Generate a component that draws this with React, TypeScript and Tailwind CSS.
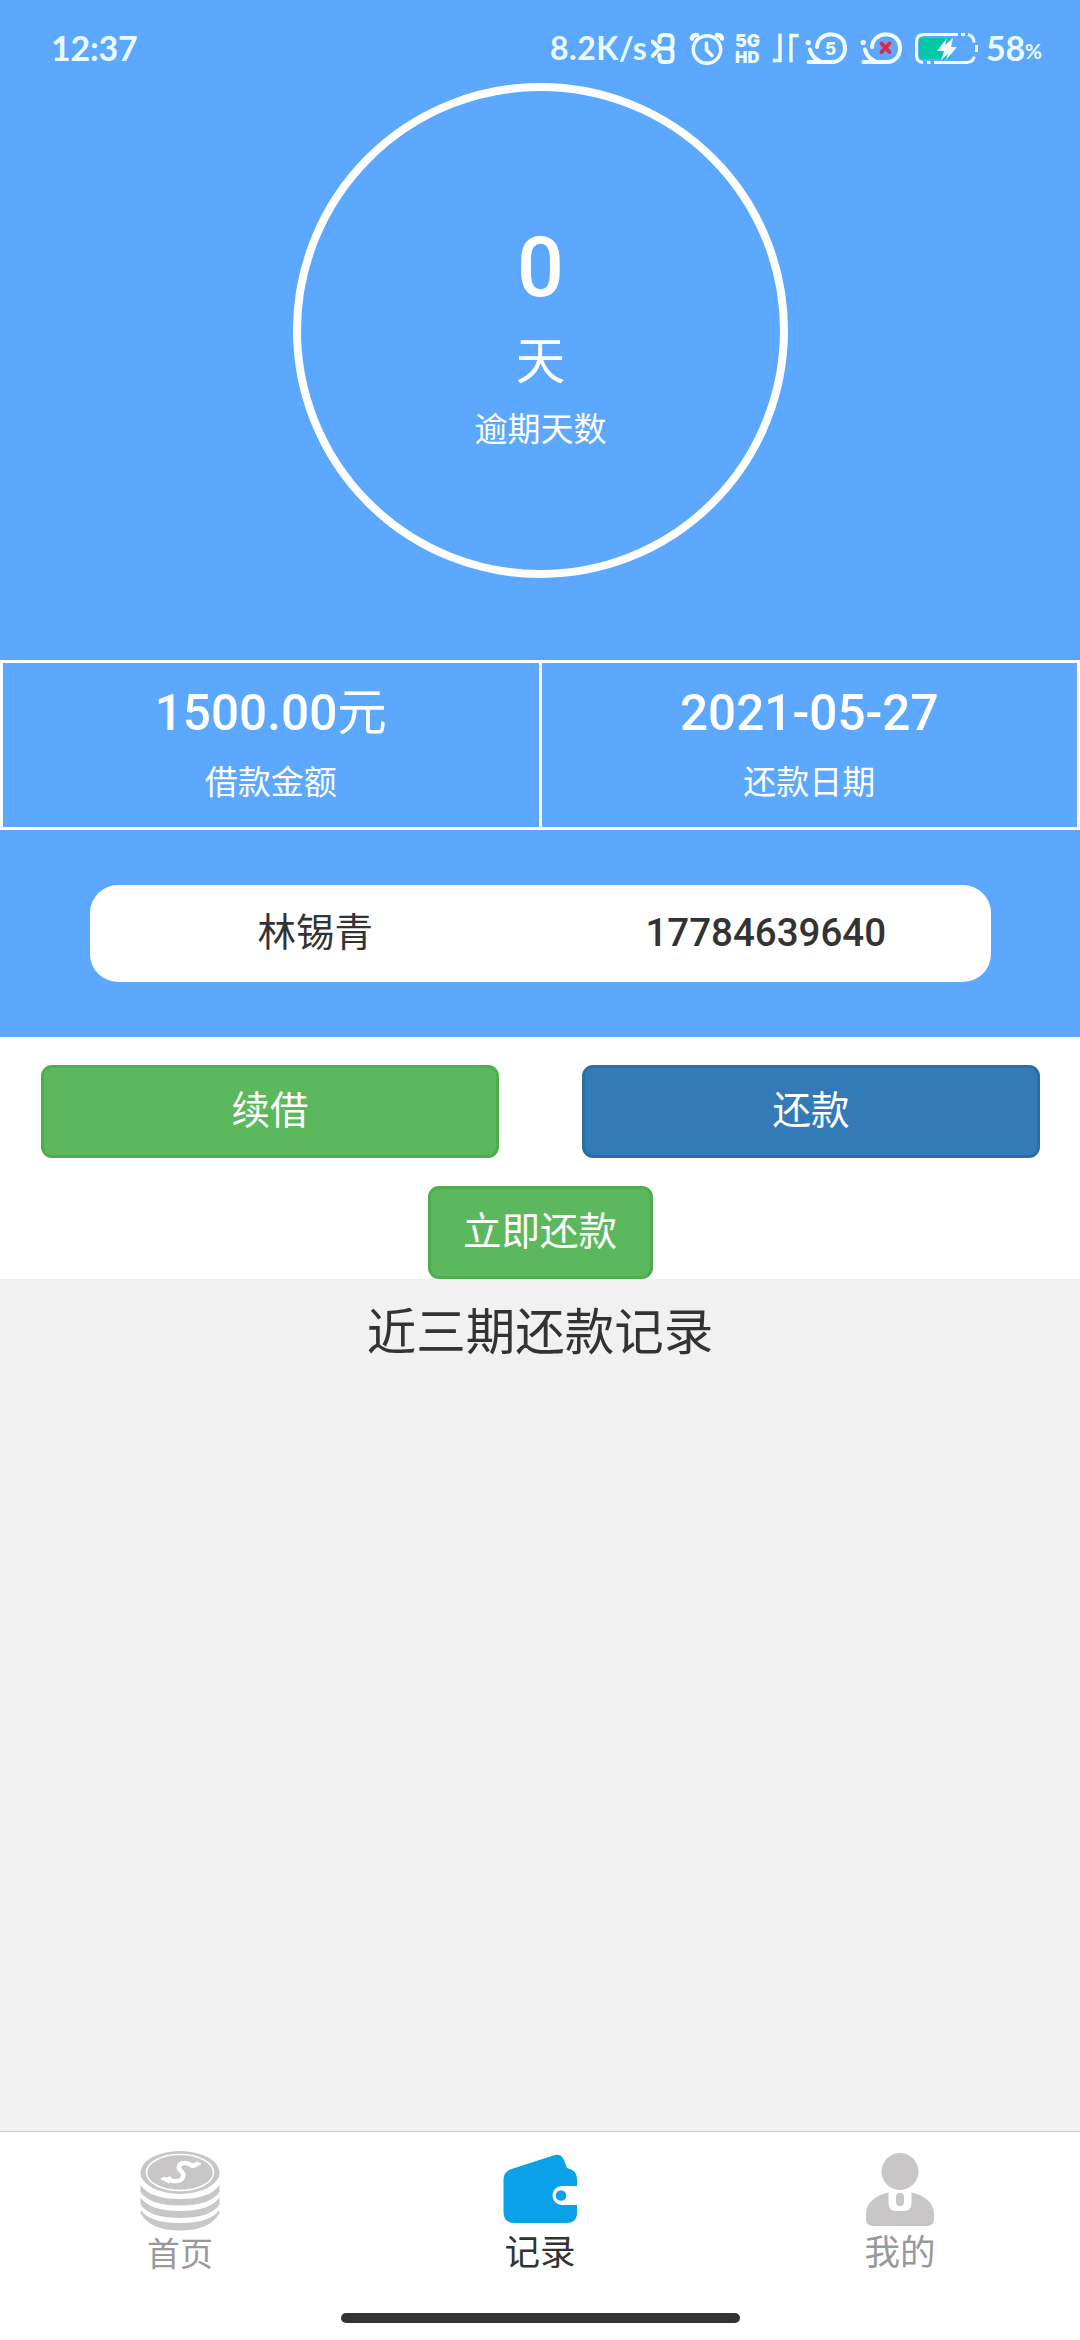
import type { ReactNode } from "react";

function StatusIcon({ viewBox, width, className, children }: { viewBox: string; width: number; className?: string; children: ReactNode }) {
  return (
    <svg viewBox={viewBox} width={width} height={40} fill="none" stroke="#f2fcff" strokeLinecap="round" strokeLinejoin="round" className={`shrink-0 ${className ?? ""}`}>
      {children}
    </svg>
  );
}

function StatusBar() {
  return (
    <div className="flex h-[83px] items-start pt-7 pl-[51px] font-['Lato'] font-bold text-[#e9fbff]">
      <span className="w-[499px] text-[34px] leading-10 tracking-[-0.2px]">12:37</span>
      <span className="w-[101px] text-[32px] leading-10 tracking-[0.5px] whitespace-nowrap">8.2K/s</span>
      <StatusIcon viewBox="651 28 24 40" width={24}>
        <path d="M652.500 41.500L659.500 48.500L652.500 56M659.500 42V39Q659.500 35 663.500 35H668Q672.500 35 672.500 39.500V44Q672.500 48.500 668 48.500H660M668 48.500Q672.500 48.500 672.500 53V57.500Q672.500 62 668 62H663.500Q659.500 62 659.500 58V55" strokeWidth="4" />
      </StatusIcon>
      <StatusIcon viewBox="689 28 36 40" width={36} className="ml-[14px]">
        <circle cx="707" cy="49.500" r="13.700" strokeWidth="3.400" />
        <path d="M706.500 43V50L712 55.500" strokeWidth="3.600" />
        <path d="M692 38.500Q692.500 35 697 35M717 35Q721.500 35 722 38.500" strokeWidth="4.500" />
      </StatusIcon>
      <div className="ml-[10px] flex w-[38px] flex-col pt-[5px] font-['Inter'] text-[17.500px] leading-4 font-black text-[#f2fcff]">
        <span>5G</span>
        <span className="text-[16.500px]">HD</span>
      </div>
      <StatusIcon viewBox="771 28 28 40" width={28} className="-ml-px">
        <path d="M773.500 60.500H779V35.500M790 60.500V35.500H796" strokeWidth="3.400" strokeLinecap="square" strokeLinejoin="miter" />
      </StatusIcon>
      <StatusIcon viewBox="804 28 43 40" width={43} className="ml-[5px]">
        <path d="M816 47C817 30 844 30 844 48C844 57 838 62 831 62H807.500M809 49.500Q811 58 819 61" strokeWidth="4" />
        <circle cx="807.200" cy="42.500" r="2.600" fill="#f2fcff" stroke="none" />
        <text x="829.500" y="54.500" textAnchor="middle" fill="#f2fcff" stroke="none" fontFamily="Inter" fontWeight="800" fontSize="17">5</text>
      </StatusIcon>
      <StatusIcon viewBox="859 28 43 40" width={43} className="ml-[12px]">
        <path d="M871 47C872 30 899 30 899 48C899 57 893 62 886 62H862.500M864 49.500Q866 58 874 61" strokeWidth="4" />
        <circle cx="862.200" cy="42.500" r="2.600" fill="#f2fcff" stroke="none" />
        <path d="M880.500 43.500L888.500 52M888.500 43.500L880.500 52" stroke="#d32c4b" strokeWidth="3.800" />
      </StatusIcon>
      <StatusIcon viewBox="913 28 65 40" width={65} className="ml-[11px]">
        <rect x="918" y="38" width="32" height="21" rx="3" fill="#05c7a8" stroke="none" />
        <path d="M957 34.500H923Q915.500 34.500 915.500 42V55Q915.500 62 922 62.500M933 62.500H966Q973 61.500 973 56.500M973 42.500Q973 36 967 34.500" strokeWidth="3" strokeLinecap="butt" />
        <path d="M960 34.500H964M926 62.500H929.500" strokeWidth="3" strokeLinecap="butt" />
        <path d="M975.500 45V52" strokeWidth="3" strokeLinecap="butt" />
        <path d="M946 38L936 51H943L940 60L947 54L945 60L956 47H950L952 38L944 45Z" fill="#f2fcff" stroke="none" />
      </StatusIcon>
      <span className="ml-[7px] text-[34px] leading-10 tracking-[-0.3px]">58</span>
      <span className="pt-[3px] text-[21px] leading-10">%</span>
    </div>
  );
}

function Summary({ value, unit, label }: { value: string; unit?: string; label: string }) {
  return (
    <div className="flex flex-1 flex-col items-center pt-[15px]">
      <div className="flex h-[70px] items-center text-[49.500px] font-medium">
        <span>{value}</span>
        {unit && <span className="font-normal">{unit}</span>}
      </div>
      <span className="mt-[12px] text-[33px] leading-[46px]">{label}</span>
    </div>
  );
}

const buttonBase = "flex h-[93px] items-center justify-center rounded-[11px] border-[3px] pb-[2px] text-[38.500px] text-white";

function CoinsIcon() {
  return (
    <svg viewBox="0 0 80 80" width={80} height={80} fill="#c8c6c7">
      <ellipse cx="40" cy="21.500" rx="39.500" ry="21.500" />
      <ellipse cx="40" cy="21.500" rx="33.500" ry="18" fill="none" stroke="white" strokeWidth="1.500" />
      <path d="M.5 34Q10 48 40 48Q70 48 79.500 34V41Q70 54.500 40 54.500Q10 54.500 .5 41Z" />
      <path d="M.5 46.500Q10 60 40 60Q70 60 79.500 46.500V53.500Q70 67 40 67Q10 67 .5 53.500Z" />
      <path d="M.5 59Q10 72 40 72Q70 72 79.500 59V62Q70 79.500 40 79.500Q10 79.500 .5 62Z" />
      <path d="M53 16C50 11 41 11 39 15C37 20 46 21 43 26C41 31 31 32 28 26" fill="none" stroke="white" strokeWidth="4.500" />
      <path d="M21 28L29 32L31 29L24 26ZM50 14L57 11L61 13L53 17Z" fill="white" stroke="white" strokeWidth="1" />
    </svg>
  );
}

function WalletIcon() {
  return (
    <svg viewBox="0 0 80 80" width={80} height={80}>
      <path d="M3.500 29Q3.500 20 13 17.500L55 4Q61 2.500 64 9L67 17Q77 19 77 28V35H62A9.500 9.500 0 0 0 62 54H77V62Q77 72 66 72H15Q3.500 72 3.500 61Z" fill="#0ba1e9" />
      <circle cx="61" cy="44.500" r="5.300" fill="#0ba1e9" />
    </svg>
  );
}

function PersonIcon() {
  return (
    <svg viewBox="0 0 80 80" width={80} height={80} fill="#c8c6c7">
      <circle cx="40" cy="20.500" r="18.500" />
      <path d="M28.500 41.500V52Q28.500 60 36 60H44Q51.500 60 51.500 52V41.500C64 44 74 52 74 62V68Q74 75 67 75H13Q6 75 6 68V62C6 52 16 44 28.500 41.500Z" />
      <rect x="36" y="42" width="8" height="13" rx="4" />
    </svg>
  );
}

function Tab({ icon, label, className }: { icon: ReactNode; label: string; className: string }) {
  return (
    <div className={`flex flex-1 flex-col items-center pt-[19px] leading-[44px] ${className}`}>
      {icon}
      <span>{label}</span>
    </div>
  );
}

export default function App() {
  return (
    <div className="flex h-[2340px] w-[1080px] flex-col overflow-hidden bg-white font-['Roboto','Noto_Sans_CJK_SC',sans-serif] text-[#333]">
      <section className="flex h-[1037px] shrink-0 flex-col bg-[#5ca8ff] text-white">
        <StatusBar />
        <div className="ml-px flex size-[495px] flex-col items-center self-center rounded-full border-8 border-white">
          <span className="mt-[127px] text-[82.500px] leading-[100px] font-medium">0</span>
          <span className="mt-[9px] text-[49.500px] leading-[70px]">天</span>
          <span className="mt-[10px] text-[33px] leading-[46px]">逾期天数</span>
        </div>
        <div className="mt-[82px] flex h-[170px] divide-x-3 divide-white border-3 border-white">
          <Summary value="1500.00" unit="元" label="借款金额" />
          <Summary value="2021-05-27" label="还款日期" />
        </div>
        <div className="mt-[55px] ml-[90px] flex h-[97px] w-[901px] items-center rounded-[28px] bg-white pb-[2px] text-center text-[38.500px] text-[#333]">
          <span className="flex-1">林锡青</span>
          <span className="flex-1 font-medium">17784639640</span>
        </div>
      </section>

      <section className="flex h-[242px] shrink-0 flex-col items-center pt-[28px]">
        <div className="flex w-full gap-[83px] pr-[40px] pl-[41px]">
          <button className={`${buttonBase} flex-1 border-[#4cae4c] bg-[#5cb85c]`}>续借</button>
          <button className={`${buttonBase} flex-1 border-[#2e6da4] bg-[#337ab7]`}>还款</button>
        </div>
        <button className={`${buttonBase} mt-[28px] w-[225px] border-[#4cae4c] bg-[#5cb85c]`}>立即还款</button>
      </section>

      <section className="flex-1 bg-[#f1f1f1] pt-[19px] text-center">
        <h2 className="text-[49.500px] leading-[70px]">近三期还款记录</h2>
      </section>

      <nav className="flex h-[209px] shrink-0 flex-col items-center border-t border-[#c8c8c8] bg-white">
        <div className="flex w-full flex-1">
          <Tab icon={<CoinsIcon />} label="首页" className="text-[33px] text-[#999] [&>span]:mt-[2px]" />
          <Tab icon={<WalletIcon />} label="记录" className="text-[35.500px] text-[#333]" />
          <Tab icon={<PersonIcon />} label="我的" className="text-[35.500px] text-[#999]" />
        </div>
        <div className="mb-[17px] h-[10px] w-[399px] rounded-full bg-[#333]" />
      </nav>
    </div>
  );
}
